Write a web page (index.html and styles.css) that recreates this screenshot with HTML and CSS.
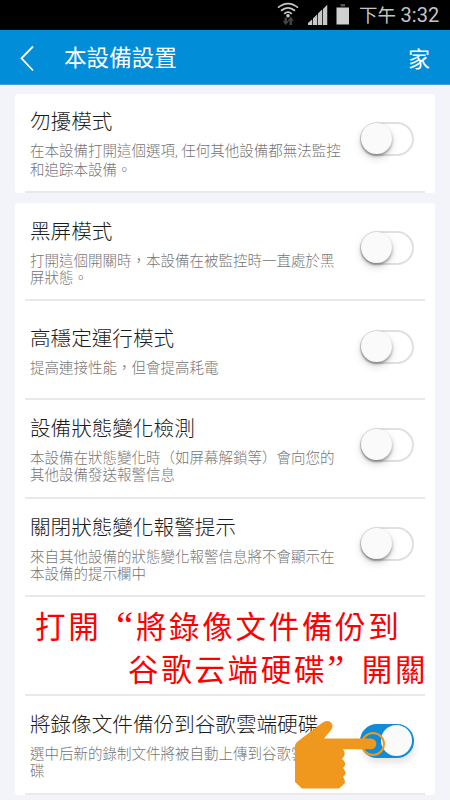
FILE: index.html
```html
<!DOCTYPE html>
<html lang="zh-Hant">
<head>
<meta charset="utf-8">
<title>本設備設置</title>
<link rel="stylesheet" href="styles.css">
</head>
<body>
<div class="statusbar">
  <svg class="status-icons" width="76" height="30" viewBox="0 0 76 30">
    <g fill="none" stroke="#c9c9c9" stroke-width="1.8">
      <path d="M1 7.6Q11 -.4 21 7.6"/><path d="M4 10.8Q11 5 18 10.8"/><path d="M7.2 13.8Q11 10.4 14.8 13.8"/>
    </g>
    <circle cx="11" cy="15.7" r="1.8" fill="#c9c9c9"/>
    <path d="M7.5 17.500h2.500v3.500h2l-3.200 4.300L5.600 21h1.900zM12.500 25v-4.200h-2L13.700 16.500l3.200 4.300h-1.900V25z" fill="#444"/>
    <path d="M31 25v-2l4-3.600V25zM36 25v-6.500l4-4V25zM41 25V13.500l4-4V25zM46 25V9l4-4V25z" fill="#c9c9c9"/>
    <path d="M31 24.500L51 4.500V25H31z" fill="#c9c9c9" fill-opacity=".25"/>
    <path d="M63.500 4h4.500v2.500h-4.500z" fill="#555"/>
    <path d="M59.500 7.500H72V24.500H59.500z" fill="#d0d0d0"/>
  </svg>
  <span class="clock">下午 <span class="digits">3:32</span></span>
</div>
<header class="topbar">
  <svg class="back" width="16" height="28" viewBox="0 0 16 28"><path d="M14 2.500L2.500 14.300L14 26.500" fill="none" stroke="#fff" stroke-width="1.800"/></svg>
  <h1 class="heading">本設備設置</h1>
  <span class="home">家</span>
</header>
<main class="content">
  <section class="card">
    <div class="row">
      <div class="text"><div class="title">勿擾模式</div><div class="desc">在本設備打開這個選項<span class="comma">, </span>任何其他設備都無法監控<br>和追踪本設備。</div></div>
      <div class="switch"></div>
    </div>
  </section>
  <section class="card">
    <div class="row">
      <div class="text"><div class="title">黑屏模式</div><div class="desc">打開這個開關時，本設備在被監控時一直處於黑<br>屏狀態。</div></div>
      <div class="switch"></div>
    </div>
    <div class="row">
      <div class="text"><div class="title">高穩定運行模式</div><div class="desc">提高連接性能，但會提高耗電</div></div>
      <div class="switch"></div>
    </div>
    <div class="row">
      <div class="text"><div class="title">設備狀態變化檢測</div><div class="desc">本設備在狀態變化時（如屏幕解鎖等）會向您的<br>其他設備發送報警信息</div></div>
      <div class="switch"></div>
    </div>
    <div class="row">
      <div class="text"><div class="title">關閉狀態變化報警提示</div><div class="desc">來自其他設備的狀態變化報警信息將不會顯示在<br>本設備的提示欄中</div></div>
      <div class="switch"></div>
    </div>
    <div class="row note">
      <div>打開<span class="quote open">“</span>將錄像文件備份到</div>
      <div class="second">谷歌云端硬碟<span class="quote">”</span>開關</div>
    </div>
    <div class="row">
      <div class="text"><div class="title">將錄像文件備份到谷歌雲端硬碟</div><div class="desc">選中后新的錄制文件將被自動上傳到谷歌雲端硬<br>碟</div></div>
      <div class="switch on"></div>
      <svg class="hand" width="96" height="72" viewBox="0 0 96 72">
        <circle cx="80" cy="24" r="11" fill="none" stroke="#ef981d" stroke-width="2"/>
        <path d="M2 26Q2 24 4 22L29 3Q34 -.5 38 2.500Q41 6 38 10L31 18.500H78A5.300 5.300 0 0 1 78 29.200H50Q54 34 49 39Q55 43 50 48Q55 53 50 57Q54 62 50 65L46 68.500H9L2 62Z" fill="#ef981d"/>
      </svg>
    </div>
  </section>
</main>
</body>
</html>
```

FILE: styles.css
```css
* { box-sizing: border-box; }
body {
  margin: 0;
  width: 450px;
  height: 800px;
  overflow: hidden;
  background: #f2f4f9;
  font-family: "Noto Sans CJK TC", sans-serif;
  font-weight: 300;
  white-space: nowrap;
}
.statusbar {
  display: flex;
  justify-content: flex-end;
  height: 30px;
  padding-right: 10px;
  background: #000;
  color: #c4c4c4;
}
.status-icons { margin-right: 6px; }
.clock {
  width: 81px;
  font: 400 18.5px/31px Roboto, "Noto Sans CJK TC", sans-serif;
}
.digits { font-size: 20px; }
.topbar {
  display: flex;
  align-items: center;
  height: 55px;
  padding: 0 20px 0 19px;
  background: #028dd8;
  border-bottom: 1px solid #4a9add;
  color: #fff;
}
.back { margin: 2px 29px 0 0; }
.heading {
  flex: 1;
  margin: 0;
  font-size: 22.6px;
  line-height: 54px;
  font-weight: 400;
}
.home { font-size: 22px; line-height: 54px; font-weight: 400; }
.content { padding: 9px 15px 0; }
.card {
  margin-bottom: 10px;
  padding: 0 10px;
  background: #fff;
  border-radius: 3px;
}
.row {
  position: relative;
  display: flex;
  align-items: center;
  justify-content: space-between;
  height: 98.7px;
  padding: 0 11px 0 5px;
  border-bottom: 2px solid #e8e9ea;
}
.text { width: 320px; }
.title { font-size: 20.6px; line-height: 26px; color: #1c1c1c; }
.desc { margin-top: 8px; font-size: 14.5px; line-height: 17.5px; color: #757575; }
.comma { font-family: Roboto, sans-serif; }
.switch {
  position: relative;
  flex: none;
  width: 54px;
  height: 34px;
  margin-top: -6px;
  border: 2px solid #e0e0e0;
  border-radius: 17px;
}
.switch::after {
  content: "";
  position: absolute;
  top: -1px;
  left: -1px;
  width: 31px;
  height: 31px;
  border-radius: 50%;
  background: #fafafa;
  box-shadow: 0 2px 3px rgba(0, 0, 0, .35), 0 4px 8px rgba(0, 0, 0, .15);
}
.switch.on { background: #118bd8; border-color: #118bd8; box-shadow: 1px 5px 6px rgba(0, 0, 0, .1); }
.switch.on::after { left: auto; right: 0; box-shadow: none; }
.note {
  flex-direction: column;
  align-items: flex-start;
  justify-content: center;
  padding: 3px 0 0 10px;
  color: #f00;
  font-family: "Noto Sans CJK SC", sans-serif;
  font-size: 30.5px;
  font-weight: 400;
  line-height: 43px;
  letter-spacing: 2.7px;
}
.second { padding-left: 93px; }
.quote {
  display: inline-block;
  width: 34.5px;
  font-family: "Liberation Serif", serif;
  font-size: 38px;
  line-height: 30px;
}
.quote.open { text-align: right; }
.hand { position: absolute; left: 268px; top: 24px; }
```
